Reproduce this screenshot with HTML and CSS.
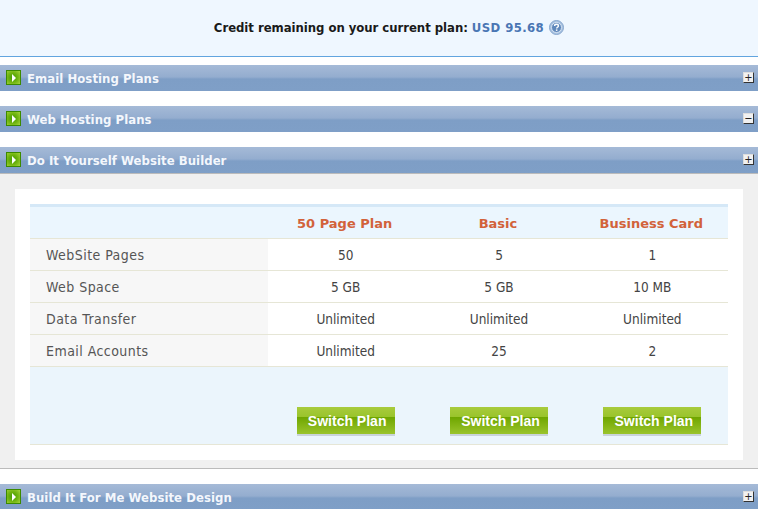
FILE: index.html
```html
<!DOCTYPE html>
<html lang="en">
<head>
    <meta charset="UTF-8">
    <meta name="viewport" content="width=device-width, initial-scale=1.0">
    <title>Switch Plan</title>
    <link rel="stylesheet" href="styles.css">
</head>
<body>
    <div class="credit">
        <span class="credit-label">Credit remaining on your current plan:</span>
        <span class="credit-value">USD 95.68</span>
        <svg class="help" width="15" height="15" viewBox="0 0 15 15">
            <circle cx="7.5" cy="7.5" r="7" fill="#a9c3e2" stroke="#86a6cd"/>
            <circle cx="7.5" cy="7.5" r="5" fill="#5f88bb" stroke="#d5e2f1"/>
            <path d="M5.6 6c0-1 .9-1.7 1.9-1.7s1.9.6 1.9 1.6c0 1.3-1.7 1.3-1.7 2.5" fill="none" stroke="#fff" stroke-width="1.4"/>
            <rect x="6.9" y="9.4" width="1.5" height="1.5" fill="#fff"/>
        </svg>
    </div>

    <div class="section">
        <div class="bar">
            <span class="arrow"></span>
            <h2>Email Hosting Plans</h2>
            <span class="toggle">+</span>
        </div>
    </div>

    <div class="section">
        <div class="bar">
            <span class="arrow"></span>
            <h2>Web Hosting Plans</h2>
            <span class="toggle">&minus;</span>
        </div>
    </div>

    <div class="section">
        <div class="bar">
            <span class="arrow"></span>
            <h2>Do It Yourself Website Builder</h2>
            <span class="toggle">+</span>
        </div>
        <div class="panel">
            <div class="card">
                <table class="plans">
                    <thead>
                        <tr>
                            <th class="label"></th>
                            <th>50 Page Plan</th>
                            <th>Basic</th>
                            <th>Business Card</th>
                        </tr>
                    </thead>
                    <tbody>
                        <tr>
                            <td class="label">WebSite Pages</td>
                            <td>50</td>
                            <td>5</td>
                            <td>1</td>
                        </tr>
                        <tr>
                            <td class="label">Web Space</td>
                            <td>5 GB</td>
                            <td>5 GB</td>
                            <td>10 MB</td>
                        </tr>
                        <tr>
                            <td class="label">Data Transfer</td>
                            <td>Unlimited</td>
                            <td>Unlimited</td>
                            <td>Unlimited</td>
                        </tr>
                        <tr>
                            <td class="label">Email Accounts</td>
                            <td>Unlimited</td>
                            <td>25</td>
                            <td>2</td>
                        </tr>
                    </tbody>
                    <tfoot>
                        <tr>
                            <td></td>
                            <td><button class="switch">Switch Plan</button></td>
                            <td><button class="switch">Switch Plan</button></td>
                            <td><button class="switch">Switch Plan</button></td>
                        </tr>
                    </tfoot>
                </table>
            </div>
        </div>
    </div>

    <div class="section">
        <div class="bar">
            <span class="arrow"></span>
            <h2>Build It For Me Website Design</h2>
            <span class="toggle">+</span>
        </div>
    </div>
</body>
</html>
```

FILE: styles.css
```css
html, body {
    height: 509px;
    overflow: hidden;
}
body {
    margin: 0;
    background-color: #fff;
    font-family: "DejaVu Sans Condensed", "DejaVu Sans", Verdana, sans-serif;
    font-stretch: condensed;
    font-size: 13px;
    color: #444;
}

/* credit strip */
.credit {
    height: 54px;
    border-bottom: 1px solid #62a5df;
    background-color: #eff7ff;
    display: flex;
    justify-content: center;
    align-items: center;
    padding: 0 0 2px 20px;
    gap: 4px;
    font-weight: bold;
}
.credit-label {
    color: #1a1a1a;
    letter-spacing: -0.04px;
}
.credit-value {
    color: #4a76b4;
    letter-spacing: 0.4px;
}
.help {
    margin-left: 1px;
}

/* section bars */
.section {
    margin-top: 8px;
}
.section + .section {
    margin-top: 15px;
}
.bar {
    height: 26px;
    display: flex;
    align-items: center;
    padding: 0 4px 1px 6px;
    box-sizing: border-box;
    background: linear-gradient(#a5bad7 0, #94adcf 46%, #7e9ec6 54%, #7f9fc7 100%);
}
.bar h2 {
    flex: 1;
    margin: 0 0 0 6px;
    padding-top: 2px;
    font-size: 13px;
    font-weight: bold;
    letter-spacing: 0.05px;
    color: #f4f7fc;
}
.arrow {
    width: 15px;
    height: 15px;
    box-sizing: border-box;
    border: 1px solid #3c8a00;
    background: radial-gradient(circle at 45% 50%, #3f9a00 0, #6fb410 50%, #a5d43c 100%);
    position: relative;
}
.arrow::after {
    content: "";
    position: absolute;
    left: 5px;
    top: 3px;
    border-left: 4px solid #fff;
    border-top: 4px solid transparent;
    border-bottom: 4px solid transparent;
}
.toggle {
    width: 9px;
    height: 9px;
    display: flex;
    justify-content: center;
    align-items: center;
    border: 1px solid #ddd;
    border-right-color: #333;
    border-bottom-color: #333;
    background-color: #f1f1f1;
    color: #222;
    font-size: 11px;
    line-height: 1;
}

/* open panel */
.panel {
    background-color: #f0f0f0;
    border-top: 1px solid #bbb;
    border-bottom: 1px solid #bbb;
    padding: 15px 15px 8px;
}
.card {
    background-color: #fff;
    padding: 15px;
}
.plans {
    width: 698px;
    table-layout: fixed;
    border-collapse: collapse;
}
.plans th {
    height: 29px;
    padding: 2px 0 0;
    border-top: 3px solid #d5e8f7;
    border-bottom: 1px solid #e6e6d6;
    background-color: #ebf6fe;
    color: #d2623a;
    font-family: "DejaVu Sans", sans-serif;
    font-stretch: normal;
    font-size: 13px;
    font-weight: bold;
    vertical-align: middle;
}
.plans th.label {
    width: 238px;
}
.plans td {
    height: 30px;
    padding: 1px 0 0 2px;
    border-bottom: 1px solid #e6e6d6;
    text-align: center;
    font-size: 13.5px;
}
.plans td.label {
    padding-left: 16px;
    background-color: #f7f7f7;
    color: #555;
    text-align: left;
    font-size: 14px;
    letter-spacing: 0.45px;
}
.plans tfoot td {
    height: 69px;
    background-color: #ebf5fc;
    vertical-align: bottom;
    padding: 0 0 8px 2px;
}
.switch {
    display: block;
    width: 98px;
    height: 29px;
    margin: 0 auto;
    padding: 1px 0 0 3px;
    border: none;
    border-bottom: 2px solid #c9d3da;
    background: linear-gradient(#a8cb3c 0, #9ac42c 36%, #6fa600 38%, #9ac42c 100%);
    color: #fff;
    font-family: "Liberation Sans", Arial, sans-serif;
    font-size: 14px;
    font-weight: bold;
    box-sizing: border-box;
}
```
